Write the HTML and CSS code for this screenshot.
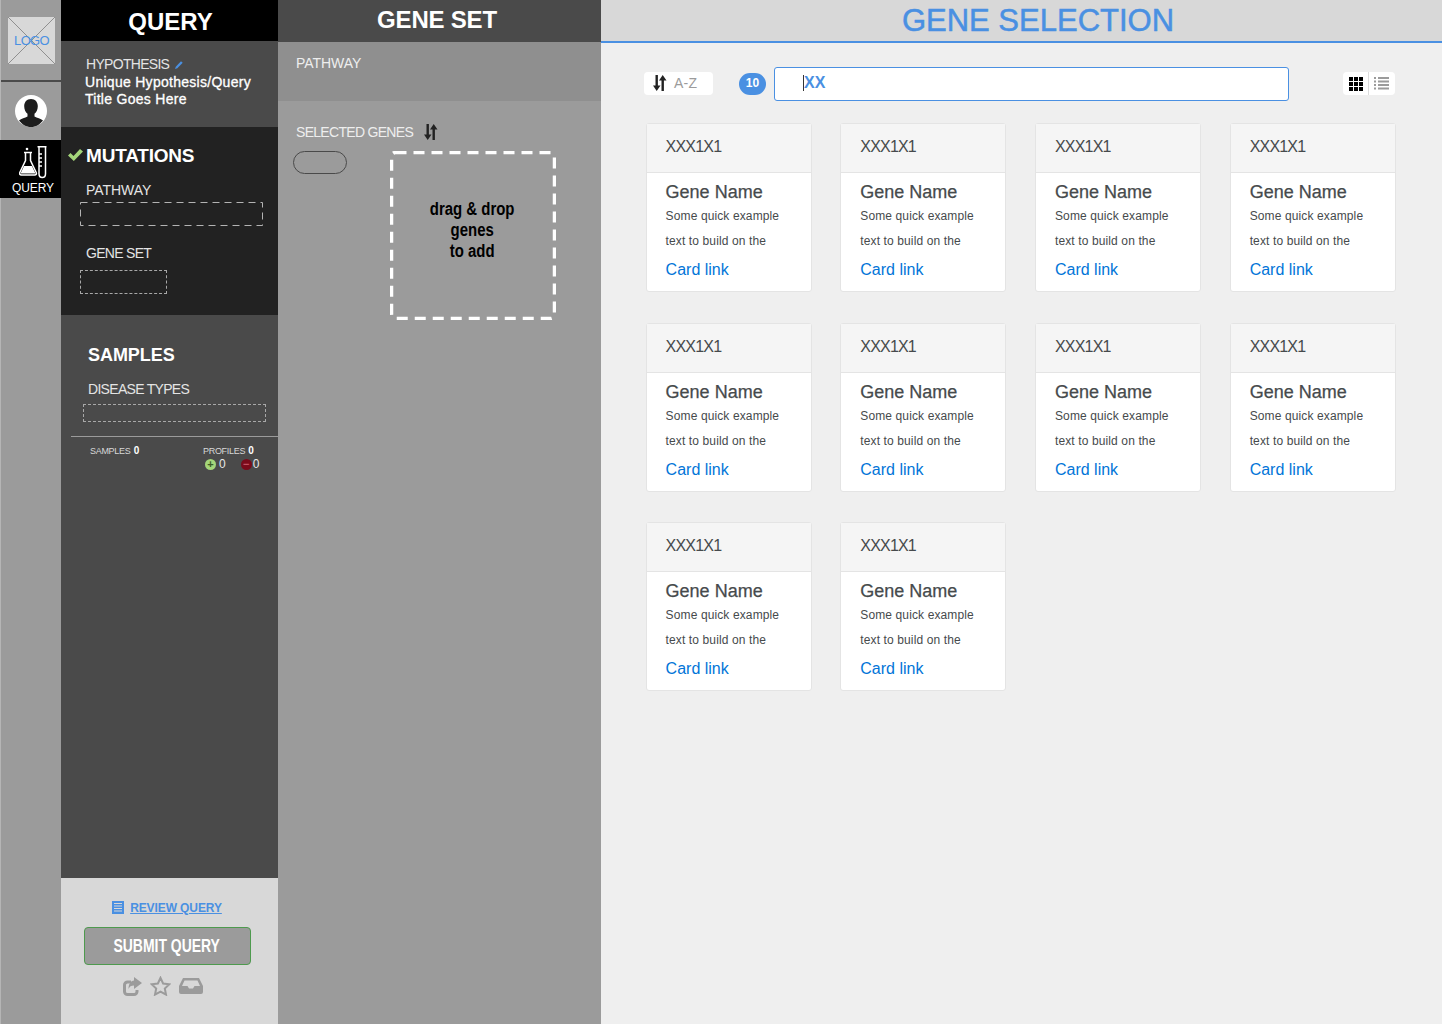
FILE: index.html
```html
<!DOCTYPE html>
<html lang="en">
<head>
    <meta charset="UTF-8">
    <meta name="viewport" content="width=device-width, initial-scale=1.0">
    <title>Gene Selection</title>
    <link rel="stylesheet" href="styles.css">
</head>
<body>
    <div class="app">
        <nav class="rail">
            <div class="logo">
                <svg class="logo-cross" width="47" height="47" viewBox="0 0 47 47"><path d="M0 0L47 47M47 0L0 47" stroke="#8f8f8f" stroke-width="1"/></svg>
                <span class="logo-text">LOGO</span>
            </div>
            <div class="rail-line"></div>
            <div class="avatar">
                <svg width="32" height="32" viewBox="0 0 32 32">
                    <circle cx="16" cy="16" r="16" fill="#fff"/>
                    <path d="M16 4c-4.400 0-6.800 3.200-6.800 7.200 0 3.200 1.400 6 3.300 7.500v2.800c-2.500 1.400-6.200 2-8.500 3.900 2.800 3.700 7.100 6.600 12 6.600s9.200-2.900 12-6.600c-2.300-1.900-6-2.500-8.500-3.900v-2.800c1.900-1.500 3.300-4.300 3.300-7.500C22.800 7.200 20.400 4 16 4z" fill="#1d1d1d"/>
                </svg>
            </div>
            <div class="rail-query">
                <svg width="28" height="33" viewBox="0 0 28 33" fill="none" stroke="#fff" stroke-width="1.500">
                    <path d="M5 6.500h8M6.500 6.500v8L.8 26.500c-.6 1.400.2 2.500 1.500 2.500h13.400c1.300 0 2.100-1.100 1.500-2.500L11.500 14.500v-8"/>
                    <path d="M5 20h8l3.500 7.500h-15z" fill="#fff" stroke="none"/>
                    <circle cx="8" cy="3" r="1.300" fill="#fff" stroke="none"/>
                    <path d="M18.500 .8h9M20 .8v27c0 5 6.500 5 6.500 0V.8M20 8h3M20 12h3M20 16h3M20 20h3"/>
                </svg>
                <span>QUERY</span>
            </div>
        </nav>

        <aside class="query">
            <h1 class="query-title">QUERY</h1>
            <section class="hypothesis">
                <div class="field-label">HYPOTHESIS
                    <svg class="pencil" width="8" height="8" viewBox="0 0 8 8"><path d="M0 8l.8-2.200L6 .3l1.700 1.500L2.300 7.200z" fill="#4a90e2"/></svg>
                </div>
                <p class="hypothesis-text">Unique Hypothesis/Query<br>Title Goes Here</p>
            </section>
            <section class="mutations">
                <h2 class="mutations-title">
                    <svg class="check" width="15" height="12" viewBox="0 0 15 12"><path d="M0 6.500l2.500-2.500 3 3L12 0l3 2.500L5.800 12z" fill="#a4d67a"/></svg>
                    MUTATIONS
                </h2>
                <div class="field-label pathway-label">PATHWAY</div>
                <svg class="dash-box" width="183" height="24" viewBox="0 0 183 24"><rect x=".5" y=".5" width="182" height="23" fill="none" stroke="#b4b4b4" stroke-dasharray="7 5"/></svg>
                <div class="field-label geneset-label">GENE SET</div>
                <div class="dash-small"></div>
            </section>
            <section class="samples">
                <h2 class="samples-title">SAMPLES</h2>
                <div class="field-label">DISEASE TYPES</div>
                <div class="dash-disease"></div>
                <div class="stats">
                    <div class="stat-samples">SAMPLES <b>0</b></div>
                    <div class="stat-profiles">
                        <div>PROFILES <b>0</b></div>
                        <div class="profile-counts">
                            <span class="dot dot-plus">+</span><span class="count">0</span>
                            <span class="dot dot-minus">&minus;</span><span class="count">0</span>
                        </div>
                    </div>
                </div>
            </section>
            <section class="submit">
                <a class="review" href="#">
                    <svg width="12" height="13" viewBox="0 0 12 13"><rect width="12" height="13" fill="#4a90e2"/><path d="M2 2.500h8M2 5h8M2 7.500h8M2 10h8" stroke="#d8d8d8"/></svg>
                    <span>REVIEW QUERY</span>
                </a>
                <button class="submit-btn"><span>SUBMIT QUERY</span></button>
                <div class="submit-icons">
                    <svg width="19" height="19" viewBox="0 0 19 19"><path d="M14 13v1.500a3 3 0 0 1-3 3H4.500a3 3 0 0 1-3-3V8a3 3 0 0 1 3-3H8" fill="none" stroke="#9b9b9b" stroke-width="3"/><path d="M11 0l8 6-8 6V8.500c-3 0-4.500 1-5.500 3.500C5.500 7 8 3.500 11 3.500z" fill="#9b9b9b"/></svg>
                    <svg width="21" height="20" viewBox="0 0 21 20"><path d="M10.500 1.800l2.600 5.700 6.200.8-4.500 4.200 1.200 6.100-5.500-3-5.500 3 1.200-6.100-4.500-4.200 6.200-.8z" fill="none" stroke="#9b9b9b" stroke-width="2"/></svg>
                    <svg width="24" height="16" viewBox="0 0 24 16"><path d="M4 0h16l4 8v6a2 2 0 0 1-2 2H2a2 2 0 0 1-2-2V8zM5.500 2.500L3 8h5.500l1.500 2.500h4L15.500 8H21l-2.500-5.500z" fill="#9b9b9b" fill-rule="evenodd"/></svg>
                </div>
            </section>
        </aside>

        <aside class="geneset">
            <h1 class="geneset-title">GENE SET</h1>
            <section class="geneset-pathway">PATHWAY</section>
            <section class="selected">
                <div class="selected-head">
                    <span>SELECTED GENES</span>
                    <svg width="14" height="16" viewBox="0 0 14 16"><path d="M2.500 0h2.400v10.500h2.600L3.700 16 0 10.500h2.500zM8.500 16h2.400V5.500h2.600L9.700 0 6 5.500h2.500z" fill="#222"/></svg>
                </div>
                <div class="selected-body">
                    <div class="gene-pill"></div>
                    <div class="dropzone">
                        <svg class="dropzone-border" width="166" height="169" viewBox="0 0 166 169"><rect x="1.500" y="1.500" width="163" height="166" rx="4" fill="none" stroke="#fff" stroke-width="3.500" stroke-dasharray="11 7"/></svg>
                        <p>drag &amp; drop<br>genes<br>to add</p>
                    </div>
                </div>
            </section>
        </aside>

        <main class="main">
            <header class="main-header">GENE SELECTION</header>
            <div class="toolbar">
                <div class="sort">
                    <svg width="14" height="16" viewBox="0 0 14 16"><path d="M2.500 0h2.400v10.500h2.600L3.700 16 0 10.500h2.500zM8.500 16h2.400V5.500h2.600L9.700 0 6 5.500h2.500z" fill="#222"/></svg>
                    <span>A-Z</span>
                </div>
                <span class="badge">10</span>
                <div class="search"><i class="caret"></i>XX</div>
                <div class="view-toggle">
                    <svg class="view-grid" width="14" height="14" viewBox="0 0 14 14"><path d="M0 0h4v4H0zM5 0h4v4H5zM10 0h4v4h-4zM0 5h4v4H0zM5 5h4v4H5zM10 5h4v4h-4zM0 10h4v4H0zM5 10h4v4H5zM10 10h4v4h-4z" fill="#000"/></svg>
                    <i class="view-line"></i>
                    <svg class="view-list" width="15" height="13" viewBox="0 0 15 13"><path d="M0 1h2M4 1h11M0 4.500h2M4 4.500h11M0 8h2M4 8h11M0 11.500h2M4 11.500h11" stroke="#9b9b9b" stroke-width="2"/></svg>
                </div>
            </div>
            <div class="cards">
                <div class="card"><div class="card-head">XXX1X1</div><div class="card-body"><h4>Gene Name</h4><p>Some quick example<br>text to build on the</p><a href="#">Card link</a></div></div>
                <div class="card"><div class="card-head">XXX1X1</div><div class="card-body"><h4>Gene Name</h4><p>Some quick example<br>text to build on the</p><a href="#">Card link</a></div></div>
                <div class="card"><div class="card-head">XXX1X1</div><div class="card-body"><h4>Gene Name</h4><p>Some quick example<br>text to build on the</p><a href="#">Card link</a></div></div>
                <div class="card"><div class="card-head">XXX1X1</div><div class="card-body"><h4>Gene Name</h4><p>Some quick example<br>text to build on the</p><a href="#">Card link</a></div></div>
                <div class="card"><div class="card-head">XXX1X1</div><div class="card-body"><h4>Gene Name</h4><p>Some quick example<br>text to build on the</p><a href="#">Card link</a></div></div>
                <div class="card"><div class="card-head">XXX1X1</div><div class="card-body"><h4>Gene Name</h4><p>Some quick example<br>text to build on the</p><a href="#">Card link</a></div></div>
                <div class="card"><div class="card-head">XXX1X1</div><div class="card-body"><h4>Gene Name</h4><p>Some quick example<br>text to build on the</p><a href="#">Card link</a></div></div>
                <div class="card"><div class="card-head">XXX1X1</div><div class="card-body"><h4>Gene Name</h4><p>Some quick example<br>text to build on the</p><a href="#">Card link</a></div></div>
                <div class="card"><div class="card-head">XXX1X1</div><div class="card-body"><h4>Gene Name</h4><p>Some quick example<br>text to build on the</p><a href="#">Card link</a></div></div>
                <div class="card"><div class="card-head">XXX1X1</div><div class="card-body"><h4>Gene Name</h4><p>Some quick example<br>text to build on the</p><a href="#">Card link</a></div></div>
            </div>
        </main>
    </div>
</body>
</html>
```

FILE: styles.css
```css
* {
    box-sizing: border-box;
}
body {
    margin: 0;
    font-family: "Liberation Sans", Arial, sans-serif;
    background: #efefef;
}
h1, h2, h4, p {
    margin: 0;
}
.app {
    display: flex;
    width: 1442px;
    height: 1024px;
    overflow: hidden;
}

/* left rail */
.rail {
    width: 61px;
    flex: none;
    background: #9b9b9b;
    border-left: 1px solid #b5b5b5;
    padding-top: 17px;
}
.logo {
    position: relative;
    width: 47px;
    height: 47px;
    margin-left: 7px;
    background: #d8d8d8;
    display: flex;
    align-items: center;
    justify-content: center;
}
.logo-cross {
    position: absolute;
    top: 0;
    left: 0;
}
.logo-text {
    position: relative;
    color: #4a90e2;
    font-size: 13px;
    letter-spacing: -0.7px;
}
.rail-line {
    height: 2px;
    margin-top: 16px;
    background: #4a4a4a;
}
.avatar {
    height: 32px;
    margin: 13px 0 13px 14px;
}
.rail-query {
    height: 58px;
    margin-left: -1px;
    background: #000;
    color: #fff;
    font-size: 12px;
    letter-spacing: -0.1px;
    display: flex;
    flex-direction: column;
    align-items: center;
    padding: 6px 0 0 5px;
    gap: 2px;
}
.rail-query svg {
    display: block;
}

/* query column */
.query {
    width: 217px;
    flex: none;
    display: flex;
    flex-direction: column;
    color: #fff;
}
.query-title {
    height: 41px;
    background: #000;
    font-size: 24px;
    line-height: 43px;
    text-align: center;
    padding-left: 2px;
}
.field-label {
    font-size: 14px;
    letter-spacing: -0.7px;
    line-height: 17px;
    color: #e4e4e4;
}
.pathway-label {
    letter-spacing: -0.05px;
}
.pencil {
    margin-left: 3px;
}
.hypothesis {
    height: 86px;
    background: #4a4a4a;
    padding: 15px 0 0 25px;
}
.hypothesis-text {
    margin-left: -1px;
    font-size: 14px;
    line-height: 17px;
    -webkit-text-stroke: 0.3px #fff;
    letter-spacing: 0.28px;
    padding-top: 1px;
}
.mutations {
    height: 188px;
    background: #222;
    padding: 17px 0 0 25px;
}
.mutations-title {
    position: relative;
    font-size: 19px;
    letter-spacing: -0.2px;
    line-height: 24px;
}
.check {
    position: absolute;
    left: -18px;
    top: 5px;
}
.mutations .field-label {
    margin-top: 14px;
}
.dash-box {
    display: block;
    margin: 3px 0 0 -6px;
}
.mutations .geneset-label {
    margin-top: 19px;
}
.dash-small {
    width: 87px;
    height: 24px;
    margin: 8px 0 0 -6px;
    border: 1px dashed #a8a8a8;
}
.samples {
    flex: 1;
    background: #4a4a4a;
    padding: 28px 0 0 27px;
}
.samples-title {
    font-size: 18px;
    letter-spacing: -0.05px;
    line-height: 24px;
}
.samples .field-label {
    margin-top: 14px;
}
.dash-disease {
    width: 183px;
    height: 18px;
    margin: 6px 0 0 -5px;
    border: 1px dashed #a8a8a8;
}
.stats {
    display: flex;
    margin: 14px 0 0 -17px;
    border-top: 1px solid #9b9b9b;
    padding: 8px 0 0 19px;
    font-size: 9px;
    letter-spacing: -0.3px;
    color: #d8d8d8;
    line-height: 11px;
}
.stats b {
    color: #fff;
    font-size: 10px;
    margin-left: 1px;
}
.stat-samples {
    width: 113px;
}
.profile-counts {
    display: flex;
    align-items: center;
    margin: 1px 0 0 2px;
    height: 12px;
}
.dot {
    width: 11px;
    height: 11px;
    border-radius: 50%;
    font-size: 11px;
    font-weight: bold;
    line-height: 11px;
    text-align: center;
    letter-spacing: 0;
}
.dot-plus {
    background: #a4d67a;
    color: #3c5c28;
}
.dot-minus {
    background: #7a0a1a;
    color: #c05060;
    margin-left: 15px;
}
.count {
    font-size: 12px;
    margin-left: 3px;
    color: #e8e8e8;
    letter-spacing: 0;
}
.dot-minus + .count {
    margin-left: 1px;
}
.submit {
    height: 146px;
    background: #d8d8d8;
    display: flex;
    flex-direction: column;
    align-items: center;
    padding-top: 23px;
}
.review {
    display: flex;
    align-items: center;
    gap: 6px;
    height: 13px;
    margin-left: -5px;
    color: #4a90e2;
    font-size: 12px;
    font-weight: bold;
    letter-spacing: -0.1px;
}
.submit-btn {
    width: 167px;
    height: 38px;
    margin: 13px 0 0 -4px;
    padding: 0 2px 0 0;
    background: #9b9b9b;
    border: 1px solid #4e9a4e;
    border-radius: 4px;
    color: #fff;
    font-family: "Liberation Sans", sans-serif;
    font-size: 18px;
    font-weight: bold;
}
.submit-btn span {
    display: inline-block;
    transform: scaleX(0.775);
}
.submit-icons {
    display: flex;
    align-items: center;
    gap: 8px;
    margin: 11px 0 0 -14px;
}

/* gene set column */
.geneset {
    width: 323px;
    flex: none;
    background: #9b9b9b;
    color: #fff;
}
.geneset-title {
    height: 42px;
    background: #4a4a4a;
    font-size: 24px;
    letter-spacing: -0.2px;
    line-height: 40px;
    text-align: center;
    padding-right: 5px;
}
.geneset-pathway {
    height: 59px;
    background: #8f8f8f;
    padding: 13px 0 0 18px;
    font-size: 14px;
    line-height: 17px;
    letter-spacing: -0.05px;
    color: #eee;
}
.selected {
    padding: 23px 0 0 16px;
}
.selected-head {
    display: flex;
    align-items: center;
    gap: 11px;
    height: 15px;
    margin-left: 2px;
    font-size: 14px;
    letter-spacing: -0.7px;
    color: #eee;
}
.selected-body {
    display: flex;
    align-items: flex-start;
    margin-top: 12px;
}
.gene-pill {
    width: 54px;
    height: 23px;
    border: 1px solid #4a4a4a;
    border-radius: 12px;
    margin-left: -1px;
}
.dropzone {
    position: relative;
    width: 166px;
    height: 169px;
    margin-left: 43px;
}
.dropzone-border {
    position: absolute;
    top: 0;
    left: 0;
}
.dropzone p {
    padding: 48px 2px 0 0;
    text-align: center;
    color: #000;
    font-size: 18px;
    font-weight: bold;
    line-height: 21px;
    transform: scaleX(0.83);
}

/* main */
.main {
    flex: 1;
    background: #efefef;
}
.main-header {
    height: 43px;
    background: #d8d8d8;
    border-bottom: 2px solid #4a90e2;
    color: #4a90e2;
    font-size: 31px;
    -webkit-text-stroke: 0.5px #4a90e2;
    line-height: 42px;
    text-align: center;
    padding-left: 33px;
}
.toolbar {
    display: flex;
    align-items: center;
    height: 34px;
    margin-top: 24px;
    padding-left: 43px;
}
.sort {
    display: flex;
    align-items: center;
    gap: 7px;
    width: 69px;
    height: 23px;
    padding: 0 0 2px 9px;
    margin-top: -1px;
    background: #fff;
    border-radius: 4px;
    color: #9b9b9b;
    font-size: 14px;
    letter-spacing: 0.2px;
}
.badge {
    width: 27px;
    height: 22px;
    margin: -1px 0 0 26px;
    background: #4a90e2;
    border-radius: 11px;
    color: #fff;
    font-size: 12px;
    font-weight: bold;
    line-height: 21px;
    text-align: center;
}
.search {
    display: flex;
    align-items: center;
    width: 515px;
    height: 34px;
    margin-left: 8px;
    padding: 0 0 2px 28px;
    background: #fff;
    border: 1px solid #4a90e2;
    border-radius: 3px;
    color: #4a90e2;
    font-size: 16px;
    font-weight: bold;
}
.caret {
    width: 1px;
    height: 16px;
    background: #333;
}
.view-toggle {
    display: flex;
    align-items: center;
    width: 52px;
    height: 23px;
    margin: -1px 0 0 54px;
    background: #fff;
    border-radius: 4px;
}
.view-grid {
    margin-left: 6px;
}
.view-line {
    width: 1px;
    height: 23px;
    margin-left: 5px;
    background: #dcdcdc;
}
.view-list {
    margin-left: 5px;
}
.cards {
    display: grid;
    grid-template-columns: repeat(4, 166px);
    grid-auto-rows: 169px;
    column-gap: 28.7px;
    row-gap: 30.5px;
    margin-top: 22px;
    padding-left: 44.6px;
}
.card {
    background: #fff;
    border: 1px solid #e4e4e4;
    border-radius: 3px;
    color: #464a4c;
}
.card-head {
    height: 49px;
    background: #f5f5f5;
    border-bottom: 1px solid #e4e4e4;
    padding-left: 19px;
    font-size: 16px;
    letter-spacing: -0.8px;
    line-height: 46px;
}
.card-body {
    padding: 8px 0 0 19px;
}
.card-body h4 {
    font-size: 18px;
    font-weight: normal;
    line-height: 22px;
    -webkit-text-stroke: 0.25px #464a4c;
}
.card-body p {
    font-size: 12px;
    letter-spacing: 0.12px;
    line-height: 25px;
    margin-top: 1px;
}
.card-body a {
    display: block;
    margin-top: 6px;
    color: #0275d8;
    font-size: 16px;
    line-height: 19px;
    text-decoration: none;
}
```
